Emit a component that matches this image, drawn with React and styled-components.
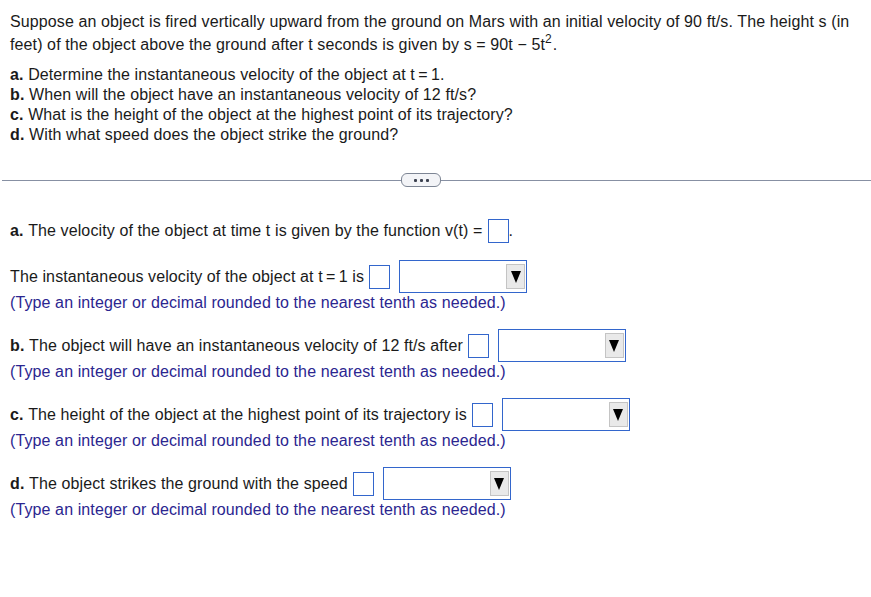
import React from "react";
import styled, { createGlobalStyle } from "styled-components";

const GlobalStyle = createGlobalStyle`
  html, body {
    margin: 0;
    padding: 0;
    background: #ffffff;
  }
  body {
    font-family: "Liberation Sans", Arial, sans-serif;
    font-size: 16px;
    letter-spacing: 0.11px;
    color: #1a1a1a;
  }
`;

const Page = styled.div`
  width: 871px;
  min-height: 597px;
  padding-top: 10px;
  box-sizing: border-box;
`;

const Question = styled.div`
  padding: 0 10px;
`;

const Intro = styled.p`
  margin: 0;
  line-height: 23px;
`;

const Sup = styled.span`
  font-size: 12px;
  line-height: 0;
  vertical-align: 7px;
  margin-right: 1px;
`;

const Parts = styled.ul`
  list-style: none;
  margin: 9px 0 0;
  padding: 0;
  line-height: 20px;
`;

const Letter = styled.b`
  font-weight: bold;
`;

const Divider = styled.div`
  display: flex;
  align-items: center;
  margin: 28px 0 0 2px;
`;

const Rule = styled.div`
  height: 1px;
  background: #8790a3;
  flex: ${(p) => (p.$left ? "0 0 399px" : "1")};
`;

const MoreButton = styled.div`
  width: 38px;
  height: 12px;
  border: 1px solid #7d8594;
  border-radius: 6px;
  background: #f3f4f7;
  display: flex;
  align-items: center;
  justify-content: center;
  gap: 3px;
`;

const Dot = styled.span`
  width: 3px;
  height: 3px;
  background: #3c4250;
  border-radius: 1px;
`;

const Answers = styled.div`
  padding: 0 10px;
  margin-top: 27px;
`;

const Row = styled.div`
  display: flex;
  align-items: center;
  height: 33px;
  margin-top: ${(p) => p.$gap || 0}px;
  white-space: nowrap;
`;

const AnswerBox = styled.span`
  display: inline-block;
  width: 19px;
  height: 22px;
  border: 1px solid #3366cc;
  margin-left: 5px;
  background: #fff;
`;

const Select = styled.div`
  width: 125px;
  height: 31px;
  border: 1px solid #3366cc;
  margin-left: 9px;
  display: flex;
  align-items: center;
  justify-content: flex-end;
  padding-right: 1px;
  background: #fff;
`;

const SelectButton = styled.div`
  width: 17px;
  height: 23px;
  background: #e9e9e9;
  border: 1px solid #c4c4c4;
  display: flex;
  align-items: center;
  justify-content: center;
`;

const Arrow = styled.span`
  width: 0;
  height: 0;
  border-left: 5px solid transparent;
  border-right: 5px solid transparent;
  border-top: 12px solid #000;
`;

const Note = styled.div`
  line-height: 20px;
  color: #2b2690;
`;

const Block = styled.div`
  margin-top: ${(p) => p.$gap || 0}px;
`;

const Dropdown = () => (
  <Select>
    <SelectButton>
      <Arrow />
    </SelectButton>
  </Select>
);

const hint = "(Type an integer or decimal rounded to the nearest tenth as needed.)";

const parts = [
  {
    letter: "b.",
    text: "The object will have an instantaneous velocity of 12 ft/s after",
  },
  {
    letter: "c.",
    text: "The height of the object at the highest point of its trajectory is",
  },
  { letter: "d.", text: "The object strikes the ground with the speed" },
];

export default function App() {
  return (
    <Page>
      <GlobalStyle />
      <Question>
        <Intro>
          Suppose an object is fired vertically upward from the ground on Mars
          with an initial velocity of 90 ft/s. The height s (in feet) of the
          object above the ground after t seconds is given by s = 90t − 5t
          <Sup>2</Sup>.
        </Intro>
        <Parts>
          <li>
            <Letter>a.</Letter> Determine the instantaneous velocity of the
            object at t{"\u2009=\u2009"}1.
          </li>
          <li>
            <Letter>b.</Letter> When will the object have an instantaneous
            velocity of 12 ft/s?
          </li>
          <li>
            <Letter>c.</Letter> What is the height of the object at the highest
            point of its trajectory?
          </li>
          <li>
            <Letter>d.</Letter> With what speed does the object strike the
            ground?
          </li>
        </Parts>
      </Question>

      <Divider>
        <Rule $left />
        <MoreButton>
          <Dot />
          <Dot />
          <Dot />
        </MoreButton>
        <Rule />
      </Divider>

      <Answers>
        <Row>
          <Letter>a.</Letter>&nbsp;The velocity of the object at time t is
          given by the function v(t) =<AnswerBox />.
        </Row>
        <Row $gap={13}>
          The instantaneous velocity of the object at t{"\u2009=\u2009"}1 is
          <AnswerBox />
          <Dropdown />
        </Row>
        <Note>{hint}</Note>

        {parts.map((p) => (
          <Block key={p.letter} $gap={16}>
            <Row>
              <Letter>{p.letter}</Letter>&nbsp;{p.text}
              <AnswerBox />
              <Dropdown />
            </Row>
            <Note>{hint}</Note>
          </Block>
        ))}
      </Answers>
    </Page>
  );
}
